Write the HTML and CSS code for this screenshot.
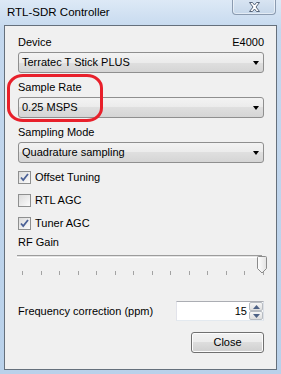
FILE: index.html
```html
<!DOCTYPE html>
<html lang="en">
<head>
  <meta charset="UTF-8" />
  <title>RTL-SDR Controller</title>
  <link rel="stylesheet" href="styles.css">
</head>
<body>
  <div class="window">
    <div class="titlebar">
      <span class="title">RTL-SDR Controller</span>
      <div class="close-x">
        <svg width="13" height="10" viewBox="0 0 13 10">
          <path d="M1.5 0.5h3l2 2.5 2-2.5h3l-3.5 4.5 3.5 4.5h-3l-2-2.5-2 2.5h-3l3.5-4.5z" fill="#fff" stroke="#56657a" stroke-width="1"/>
        </svg>
      </div>
    </div>

    <div class="client">
      <div class="field">
        <div class="label-row"><span>Device</span><span>E4000</span></div>
        <div class="combo"><span>Terratec T Stick PLUS</span><span class="arrow"></span></div>
      </div>

      <div class="field">
        <div class="label-row"><span>Sample Rate</span></div>
        <div class="combo"><span>0.25 MSPS</span><span class="arrow"></span></div>
      </div>

      <div class="field">
        <div class="label-row"><span>Sampling Mode</span></div>
        <div class="combo"><span>Quadrature sampling</span><span class="arrow"></span></div>
      </div>

      <div class="checks">
        <div class="check">
          <span class="box">
            <svg width="11" height="11" viewBox="0 0 11 11"><path d="M2 5.5l2.2 2.5 4.8-6" fill="none" stroke="#4b6196" stroke-width="1.8"/></svg>
          </span>
          <span>Offset Tuning</span>
        </div>
        <div class="check">
          <span class="box"></span>
          <span>RTL AGC</span>
        </div>
        <div class="check">
          <span class="box">
            <svg width="11" height="11" viewBox="0 0 11 11"><path d="M2 5.5l2.2 2.5 4.8-6" fill="none" stroke="#4b6196" stroke-width="1.8"/></svg>
          </span>
          <span>Tuner AGC</span>
        </div>
      </div>

      <div class="gain-label">RF Gain</div>
      <div class="slider">
        <div class="track"></div>
        <svg class="thumb" width="10" height="18" viewBox="0 0 10 18">
          <defs>
            <linearGradient id="tg" x1="0" y1="0" x2="1" y2="0">
              <stop offset="0" stop-color="#ffffff"/>
              <stop offset="1" stop-color="#e2e2e2"/>
            </linearGradient>
          </defs>
          <path d="M1.5 0.5h7a1 1 0 0 1 1 1v11l-4.5 4.5-4.5-4.5v-11a1 1 0 0 1 1-1z" fill="url(#tg)" stroke="#8b8b8b"/>
        </svg>
        <div class="ticks">
          <i></i><i></i><i></i><i></i><i></i><i></i><i></i>
          <i></i><i></i><i></i><i></i><i></i><i></i><i></i>
        </div>
      </div>

      <div class="freq-row">
        <span>Frequency correction (ppm)</span>
        <div class="updown">
          <span class="value">15</span>
          <div class="spin">
            <div class="spin-btn"><svg width="7" height="4" viewBox="0 0 7 4"><path d="M0 4h7L3.5 0z" fill="#4d6185"/></svg></div>
            <div class="spin-btn"><svg width="7" height="4" viewBox="0 0 7 4"><path d="M0 0h7L3.5 4z" fill="#4d6185"/></svg></div>
          </div>
        </div>
      </div>

      <div class="actions">
        <div class="button">Close</div>
      </div>

      <div class="highlight"></div>
    </div>
  </div>
</body>
</html>
```

FILE: styles.css
```css
body {
  margin: 0;
  font-family: 'Liberation Sans', Arial, sans-serif;
  font-size: 11px;
  color: #000;
}

.window {
  width: 281px;
  height: 374px;
  box-sizing: border-box;
  background: linear-gradient(#dde9f6, #c4d8ee 30px, #b9d1ea);
  display: flex;
  flex-direction: column;
}

.titlebar {
  height: 25px;
  display: flex;
  justify-content: space-between;
  align-items: flex-start;
}

.title {
  font-size: 11.5px;
  line-height: 14px;
  padding: 5px 0 0 7px;
  color: #000;
}

.close-x {
  width: 44px;
  height: 16px;
  margin: -1px 5px 0 0;
  box-sizing: border-box;
  border: 1px solid #8b9bb0;
  border-top: none;
  border-radius: 0 0 4px 4px;
  background: linear-gradient(#d9e5f2, #c6d7ea);
  box-shadow: inset 0 0 0 1px rgba(255, 255, 255, 0.5);
  display: flex;
  align-items: center;
  justify-content: center;
}

.close-x svg {
  display: block;
  margin-top: 1px;
}

.client {
  position: relative;
  margin-left: 4px;
  width: 273px;
  height: 345px;
  box-sizing: border-box;
  border: 1px solid #65707c;
  background-color: #f0f0f0;
  padding: 10px 12px 0 13px;
}

.field {
  margin-bottom: 8px;
}

.label-row {
  display: flex;
  justify-content: space-between;
  line-height: 13px;
  margin-bottom: 3px;
}

.combo {
  height: 21px;
  box-sizing: border-box;
  border: 1px solid #8f8f8f;
  border-radius: 3px;
  background: linear-gradient(#f3f3f3, #ebebeb 50%, #dfdfdf 50%, #d5d5d5);
  display: flex;
  align-items: center;
  justify-content: space-between;
  padding: 0 4px 0 3px;
  line-height: 13px;
}

.arrow {
  width: 0;
  height: 0;
  border-left: 3.5px solid transparent;
  border-right: 3.5px solid transparent;
  border-top: 4px solid #000;
  margin-top: 1px;
}

.checks {
  margin-top: 6px;
  display: flex;
  flex-direction: column;
  gap: 10px;
}

.check {
  display: flex;
  align-items: center;
  gap: 4px;
  height: 13px;
  line-height: 13px;
}

.box {
  width: 13px;
  height: 13px;
  box-sizing: border-box;
  border: 1px solid #8e8f8f;
  background: linear-gradient(135deg, #dcdcdc, #fbfbfb);
  display: flex;
  align-items: center;
  justify-content: center;
}

.box svg {
  display: block;
}

.gain-label {
  line-height: 13px;
  margin-top: 6px;
}

.slider {
  position: relative;
  height: 30px;
  margin-top: 2px;
}

.track {
  margin: 6px 2px 0 -1px;
  height: 3px;
  box-sizing: border-box;
  border-top: 1px solid #9c9c9c;
  border-bottom: 1px solid #ffffff;
  background-color: #e4e4e4;
}

.thumb {
  position: absolute;
  right: -3px;
  top: 1px;
}

.ticks {
  display: flex;
  justify-content: space-between;
  margin: 13px 0 0 4px;
}

.ticks i {
  display: block;
  width: 1px;
  height: 4px;
  background-color: #a3a3a3;
}

.freq-row {
  margin-top: 16px;
  display: flex;
  align-items: center;
  justify-content: space-between;
  line-height: 13px;
}

.updown {
  width: 88px;
  height: 20px;
  box-sizing: border-box;
  border: 1px solid #abadb3;
  border-color: #abadb3 #dbdfe6 #e3e9ef #e2e3ea;
  background-color: #fff;
  display: flex;
  align-items: center;
  justify-content: flex-end;
}

.value {
  padding-right: 2px;
}

.spin {
  width: 14px;
  height: 18px;
  display: flex;
  flex-direction: column;
}

.spin-btn {
  flex: 1;
  box-sizing: border-box;
  border: 1px solid #b8bcc2;
  border-radius: 2px;
  background: linear-gradient(#f6f6f6, #dedede);
  display: flex;
  align-items: center;
  justify-content: center;
}

.spin-btn svg {
  display: block;
}

.actions {
  margin-top: 11px;
  display: flex;
  justify-content: flex-end;
}

.button {
  width: 73px;
  height: 21px;
  box-sizing: border-box;
  border: 1px solid #707070;
  border-radius: 3px;
  background: linear-gradient(#f2f2f2, #ebebeb 50%, #dddddd 50%, #cfcfcf);
  box-shadow: inset 0 0 0 1px #fcfcfc;
  display: flex;
  align-items: center;
  justify-content: center;
  line-height: 13px;
}

.highlight {
  position: absolute;
  left: 2px;
  top: 48px;
  width: 96px;
  height: 48px;
  box-sizing: border-box;
  border: 3.5px solid #e8202b;
  border-radius: 16px / 14px;
}
```
